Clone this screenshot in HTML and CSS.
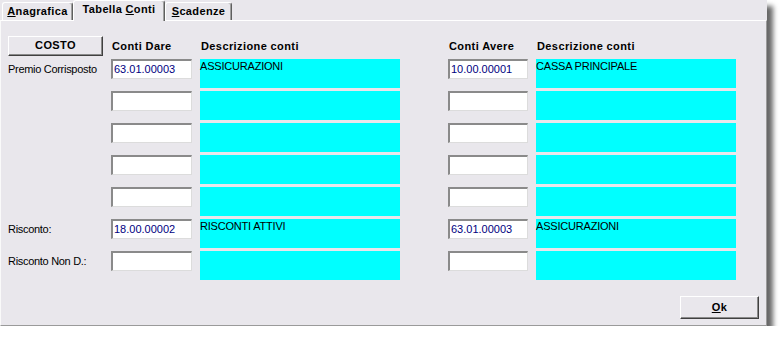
FILE: index.html
```html
<!DOCTYPE html>
<html>
<head>
<meta charset="utf-8">
<link rel="stylesheet" href="styles.css">
</head>
<body>
<div class="window">
  <div class="tabbar">
    <div class="tab tab-a"><u>A</u>nagrafica</div>
    <div class="tab tab-b active">Tabella <u>C</u>onti</div>
    <div class="tab tab-c"><u>S</u>cadenze</div>
  </div>
  <div class="page">
    <div class="grid">
      <div class="btn costo">COSTO</div>
      <div class="head">Conti Dare</div>
      <div class="head">Descrizione conti</div>
      <div class="spacer"></div>
      <div class="head">Conti Avere</div>
      <div class="head">Descrizione conti</div>

      <div class="label">Premio Corrisposto</div>
      <div class="field">63.01.00003</div>
      <div class="desc">ASSICURAZIONI</div>
      <div class="spacer"></div>
      <div class="field">10.00.00001</div>
      <div class="desc">CASSA PRINCIPALE</div>

      <div class="label"></div>
      <div class="field"></div>
      <div class="desc"></div>
      <div class="spacer"></div>
      <div class="field"></div>
      <div class="desc"></div>

      <div class="label"></div>
      <div class="field"></div>
      <div class="desc"></div>
      <div class="spacer"></div>
      <div class="field"></div>
      <div class="desc"></div>

      <div class="label"></div>
      <div class="field"></div>
      <div class="desc"></div>
      <div class="spacer"></div>
      <div class="field"></div>
      <div class="desc"></div>

      <div class="label"></div>
      <div class="field"></div>
      <div class="desc"></div>
      <div class="spacer"></div>
      <div class="field"></div>
      <div class="desc"></div>

      <div class="label">Risconto:</div>
      <div class="field">18.00.00002</div>
      <div class="desc">RISCONTI ATTIVI</div>
      <div class="spacer"></div>
      <div class="field">63.01.00003</div>
      <div class="desc">ASSICURAZIONI</div>

      <div class="label">Risconto Non D.:</div>
      <div class="field"></div>
      <div class="desc"></div>
      <div class="spacer"></div>
      <div class="field"></div>
      <div class="desc"></div>
    </div>
    <div class="footer">
      <div class="btn ok"><u>O</u>k</div>
    </div>
  </div>
</div>
</body>
</html>
```
FILE: styles.css
```css
html, body {
  margin: 0;
  padding: 0;
  background: #ffffff;
}

body {
  font-family: "Liberation Sans", Arial, sans-serif;
  font-size: 11px;
  color: #000;
}

.window {
  width: 767px;
  height: 326px;
  background: #e9e7ec;
  box-shadow: 6px 6px 5px rgba(0, 0, 0, 0.6);
  display: flex;
  flex-direction: column;
  box-sizing: border-box;
}

.tabbar {
  height: 20px;
  display: flex;
  align-items: flex-end;
  padding-left: 2px;
  flex: none;
}

.tab {
  box-sizing: border-box;
  height: 18px;
  line-height: 17px;
  border-top: 1px solid #ffffff;
  border-left: 1px solid #ffffff;
  border-right: 1px solid #5f5f5f;
  box-shadow: inset -1px 0 0 #a0a0a0;
  border-radius: 3px 3px 0 0;
  font-weight: bold;
  letter-spacing: 0.35px;
  text-align: center;
  background: #e9e7ec;
}

.tab u {
  text-decoration-thickness: 1px;
  text-underline-offset: 1px;
}

.tab-a { width: 71px; }
.tab-b { width: 92px; }
.tab-c { width: 67px; }

.tab.active {
  height: 21px;
  margin-bottom: -1px;
  padding-bottom: 3px;
  position: relative;
  z-index: 1;
}

.page {
  flex: 1;
  box-sizing: border-box;
  border-top: 1px solid #ffffff;
  border-left: 1px solid #fafafa;
  border-right: 1px solid #9a9a9a;
  border-bottom: 1px solid #9a9a9a;
  padding: 15px 0 0 7px;
  display: flex;
  flex-direction: column;
}

.grid {
  display: grid;
  grid-template-columns: 95px 81px 200px 32px 80px 200px;
  grid-template-rows: 20px repeat(7, 29px);
  column-gap: 8px;
  row-gap: 3px;
}

.btn {
  box-sizing: border-box;
  background: #e9e7ec;
  border-top: 1px solid #ffffff;
  border-left: 1px solid #ffffff;
  border-right: 1px solid #404040;
  border-bottom: 1px solid #404040;
  box-shadow: inset -1px -1px 0 #8a8a8a;
  font-weight: bold;
  letter-spacing: 0.4px;
  text-align: center;
}

.costo {
  height: 20px;
  line-height: 17px;
}

.head {
  font-weight: bold;
  letter-spacing: 0.4px;
  line-height: 20px;
  padding-left: 1px;
}

.label {
  line-height: 20px;
  height: 20px;
  letter-spacing: -0.3px;
  white-space: nowrap;
}

.field {
  box-sizing: border-box;
  height: 20px;
  background: #ffffff;
  border-top: 2px solid #8a8a8a;
  border-left: 2px solid #8a8a8a;
  border-right: 1px solid #dcdcdc;
  border-bottom: 1px solid #dcdcdc;
  color: #00007f;
  line-height: 16px;
  padding-left: 1px;
  white-space: nowrap;
}

.desc {
  background: #00ffff;
  line-height: 13px;
  padding-top: 1px;
  letter-spacing: -0.2px;
  white-space: nowrap;
}

.footer {
  display: flex;
  justify-content: flex-end;
  padding-right: 7px;
  margin-top: 16px;
}

.ok {
  width: 79px;
  height: 23px;
  line-height: 20px;
}

.ok u {
  text-decoration-thickness: 1px;
  text-underline-offset: 1px;
}
```
